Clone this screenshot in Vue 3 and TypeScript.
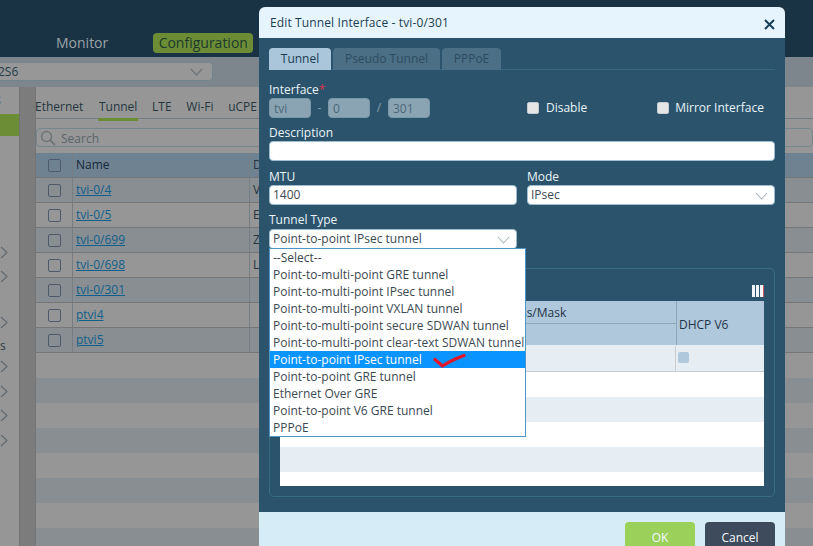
<script setup lang="ts">
const tabs: string[] = ['Ethernet', 'Tunnel', 'LTE', 'Wi-Fi', 'uCPE']
const rows: { name: string; desc: string }[] = [
  { name: 'tvi-0/4', desc: 'V' },
  { name: 'tvi-0/5', desc: 'E' },
  { name: 'tvi-0/699', desc: 'Z' },
  { name: 'tvi-0/698', desc: 'L' },
  { name: 'tvi-0/301', desc: '' },
  { name: 'ptvi4', desc: '' },
  { name: 'ptvi5', desc: '' },
]
const emptyRows: number[] = [1, 2, 3, 4, 5, 6, 7, 8]
const options: string[] = [
  '--Select--',
  'Point-to-multi-point GRE tunnel',
  'Point-to-multi-point IPsec tunnel',
  'Point-to-multi-point VXLAN tunnel',
  'Point-to-multi-point secure SDWAN tunnel',
  'Point-to-multi-point clear-text SDWAN tunnel',
  'Point-to-point IPsec tunnel',
  'Point-to-point GRE tunnel',
  'Ethernet Over GRE',
  'Point-to-point V6 GRE tunnel',
  'PPPoE',
]
const selected = 'Point-to-point IPsec tunnel'
const innerRows: number[] = [1, 2, 3, 4, 5]
</script>

<template>
  <div class="page">
    <header class="top">
      <span class="nav">Monitor</span>
      <span class="nav active">Configuration</span>
    </header>
    <div class="toolbar">
      <div class="device">
        <span class="device-name">2S6</span>
        <svg class="chev" width="13" height="8" viewBox="0 0 13 8"><path d="M1 1l5.500 6L12 1" fill="none" stroke="#6c7478" stroke-width="1.200" /></svg>
      </div>
    </div>
    <div class="content">
      <aside class="side">
        <div class="side-top">8</div>
        <div class="side-green"></div>
        <div class="side-list">
          <div class="side-row r1"><svg width="8" height="13" viewBox="0 0 8 13"><path d="M1 1l6 5.500L1 12" fill="none" stroke="#5f6870" stroke-width="1.100" /></svg></div>
          <div class="side-row r2"><svg width="8" height="13" viewBox="0 0 8 13"><path d="M1 1l6 5.500L1 12" fill="none" stroke="#5f6870" stroke-width="1.100" /></svg></div>
          <div class="side-row r3"><svg width="8" height="13" viewBox="0 0 8 13"><path d="M1 1l6 5.500L1 12" fill="none" stroke="#5f6870" stroke-width="1.100" /></svg></div>
          <div class="side-row r4"><span>s</span></div>
          <div class="side-row r5"><svg width="8" height="13" viewBox="0 0 8 13"><path d="M1 1l6 5.500L1 12" fill="none" stroke="#5f6870" stroke-width="1.100" /></svg></div>
          <div class="side-row r5"><svg width="8" height="13" viewBox="0 0 8 13"><path d="M1 1l6 5.500L1 12" fill="none" stroke="#5f6870" stroke-width="1.100" /></svg></div>
          <div class="side-row r5"><svg width="8" height="13" viewBox="0 0 8 13"><path d="M1 1l6 5.500L1 12" fill="none" stroke="#5f6870" stroke-width="1.100" /></svg></div>
          <div class="side-row r5"><svg width="8" height="13" viewBox="0 0 8 13"><path d="M1 1l6 5.500L1 12" fill="none" stroke="#5f6870" stroke-width="1.100" /></svg></div>
        </div>
      </aside>
      <div class="gutter"></div>
      <main class="main">
        <nav class="subtabs">
          <span v-for="t in tabs" :key="t" class="subtab" :class="{ on: t === 'Tunnel' }">{{ t }}</span>
        </nav>
        <div class="search">
          <svg width="16" height="16" viewBox="0 0 16 16"><circle cx="6.500" cy="6.500" r="5" fill="none" stroke="#6d7478" stroke-width="1.400" /><path d="M10.200 10.200L15 15" stroke="#6d7478" stroke-width="1.800" /></svg>
          <span class="search-text">Search</span>
        </div>
        <div class="grid">
          <div class="grow head">
            <div class="c1"><span class="cb"></span></div>
            <div class="c2">Name</div>
            <div class="c3">D</div>
          </div>
          <div v-for="(r, i) in rows" :key="r.name" class="grow" :class="i % 2 === 0 ? 'dark' : 'light'">
            <div class="c1"><span class="cb"></span></div>
            <div class="c2"><a class="link">{{ r.name }}</a></div>
            <div class="c3">{{ r.desc }}</div>
          </div>
          <div v-for="n in emptyRows" :key="n" class="empty" :class="n % 2 === 1 ? 'light' : 'dark'"></div>
        </div>
      </main>
    </div>

    <section class="modal">
      <div class="m-head">
        <span class="m-title">Edit Tunnel Interface - tvi-0/301</span>
        <svg width="11" height="11" viewBox="0 0 11 11"><path d="M1 1l9 9M10 1l-9 9" stroke="#173e57" stroke-width="2" /></svg>
      </div>
      <div class="m-body">
        <div class="m-tabs">
          <span class="m-tab on">Tunnel</span>
          <span class="m-tab w2">Pseudo Tunnel</span>
          <span class="m-tab w3">PPPoE</span>
        </div>
        <div class="lbl l-if">Interface<i>*</i></div>
        <div class="if-row">
          <span class="ro w1">tvi</span>
          <span class="sep s1">-</span>
          <span class="ro w1">0</span>
          <span class="sep s2">/</span>
          <span class="ro w1">301</span>
          <label class="chk c-dis"><span class="box"></span>Disable</label>
          <label class="chk c-mir"><span class="box"></span>Mirror Interface</label>
        </div>
        <div class="lbl l-desc">Description</div>
        <div class="inp full"></div>
        <div class="two">
          <div>
            <div class="lbl">MTU</div>
            <div class="inp">1400</div>
          </div>
          <div>
            <div class="lbl">Mode</div>
            <div class="inp sel">IPsec
              <svg width="13" height="8" viewBox="0 0 13 8"><path d="M1 1l5.500 6L12 1" fill="none" stroke="#a9b6bf" stroke-width="1.100" /></svg>
            </div>
          </div>
        </div>
        <div class="lbl l-type">Tunnel Type</div>
        <div class="type-wrap">
          <div class="inp sel">{{ selected }}
            <svg width="13" height="8" viewBox="0 0 13 8"><path d="M1 1l5.500 6L12 1" fill="none" stroke="#a9b6bf" stroke-width="1.100" /></svg>
          </div>
          <ul class="drop">
            <li v-for="o in options" :key="o" :class="{ hl: o === selected }">{{ o }}</li>
          </ul>
          <svg class="tick" width="34" height="16" viewBox="0 0 34 16"><path d="M2 6.500L9.500 13C14 10 23 5.500 31 2.500" fill="none" stroke="#e2162a" stroke-width="3.200" stroke-linecap="round" stroke-linejoin="round" /></svg>
        </div>
        <fieldset class="box-set">
          <div class="col-ico"><i></i><i></i><i></i></div>
          <div class="in-table">
            <div class="in-head">
              <div class="h-left">
                <div class="h-top">Address/Mask</div>
                <div class="h-sub">IPv6</div>
              </div>
              <div class="h-right">DHCP V6</div>
            </div>
            <div class="in-row first">
              <div class="cell-main"></div>
              <div class="cell-dhcp"><span class="mini"></span></div>
            </div>
            <div v-for="n in innerRows" :key="n" class="in-row" :class="n % 2 === 0 ? 'tint' : ''"></div>
          </div>
        </fieldset>
      </div>
      <div class="m-foot">
        <span class="btn ok">OK</span>
        <span class="btn cancel">Cancel</span>
      </div>
    </section>
  </div>
</template>

<style>
html, body { margin: 0; padding: 0; background: #969696; }
</style>

<style scoped>
.page { position: relative; width: 813px; height: 546px; overflow: hidden; font: 12px/16px "Open Sans", sans-serif; background: #969696; color: #1f2f3a; }
.top { height: 57px; background: #1a3344; display: flex; align-items: flex-end; box-sizing: border-box; padding: 0 0 4px 56px; font-size: 14px; }
.nav { color: #9aa3a8; height: 20px; line-height: 20px; }
.nav.active { margin-left: 45px; width: 100px; text-align: center; background: #6c8c36; color: #1d3a2c; border-radius: 4px; }
.toolbar { height: 30px; background: #7c868c; box-sizing: border-box; padding-top: 5px; }
.device { width: 213px; height: 19px; box-sizing: border-box; background: #979797; border: 1px solid #74858f; border-left: 0; border-radius: 0 4px 4px 0; display: flex; align-items: center; justify-content: space-between; padding: 0 9px 0 0; font-size: 12px; color: #233a48; }
.device-name { margin-left: -2px; }
.content { display: flex; height: 459px; }
.side { width: 19px; background: #969696; border-right: 1px solid #727272; position: relative; overflow: hidden; }
.side-top { height: 27px; font-size: 14px; line-height: 26px; margin-left: -7px; color: #3a5060; }
.side-green { height: 22px; background: #6c8c36; }
.side-list { padding-top: 110px; }
.side-row { height: 13px; line-height: 13px; color: #2a3a44; }
.side-row svg { display: block; }
.r1 { margin-bottom: 11px; }
.r2 { margin-bottom: 33px; }
.r3 { margin-bottom: 10px; }
.r4 { margin-bottom: 8px; }
.r5 { margin-bottom: 11.500px; }
.gutter { width: 15px; background: #7c7c7c; border-right: 1px solid #757575; }
.main { flex: 1; min-width: 0; }
.subtabs { height: 32px; box-sizing: border-box; padding-top: 12px; display: flex; border-bottom: 1px solid #6f7a81; }
.subtab { height: 20px; line-height: 16px; margin-right: 14.700px; color: #253640; position: relative; }
.subtab:first-child { margin-left: -1px; margin-right: 15.600px; }
.subtab.on::after { content: ""; position: absolute; left: -1px; right: -1px; bottom: -2px; height: 3px; background: #6c8c36; }
.search { margin-top: 9px; height: 19px; box-sizing: border-box; border: 1px solid #75868f; border-radius: 4px; background: #979797; display: flex; align-items: center; padding-left: 3px; gap: 5px; color: #59646b; }
.search-text { position: relative; top: 1px; }
.grid { margin-top: 6px; }
.grow { display: flex; height: 25px; box-sizing: border-box; border-bottom: 1px solid #767676; align-items: center; }
.grow.head { background: #6f8292; color: #16283a; }
.dark { background: #898e92; }
.light { background: #969696; }
.c1 { width: 37px; flex: none; height: 100%; display: flex; align-items: center; justify-content: center; border-right: 1px solid #767e83; box-sizing: border-box; }
.c2 { width: 177px; flex: none; height: 100%; padding-left: 3px; box-sizing: border-box; border-right: 1px solid #767e83; line-height: 24px; }
.c3 { padding-left: 3px; color: #26343d; line-height: 24px; height: 100%; }
.cb { width: 11px; height: 11px; border: 1px solid #4c5a6c; border-radius: 2px; display: block; }
.link { color: #0f5f8c; text-decoration: underline; }
.empty { height: 25px; }

.modal { position: absolute; left: 259px; top: 7px; width: 526px; height: 560px; border-radius: 6px 6px 0 0; overflow: hidden; display: flex; flex-direction: column; }
.m-head { height: 31px; flex: none; background: #e6f5fd; display: flex; align-items: center; justify-content: space-between; padding: 0 10px 0 11px; color: #1d3d52; font-size: 12px; }
.m-title { letter-spacing: 0.120px; }
.m-head svg { margin-top: 3px; }
.m-body { height: 474px; flex: none; box-sizing: border-box; background: #2b536b; padding: 10px 10px 0; color: #e9f3f8; position: relative; }
.m-tabs { height: 22px; display: flex; gap: 2px; border-bottom: 1px solid #35687f; box-sizing: border-box; }
.m-tab { width: 62px; height: 22px; box-sizing: border-box; text-align: center; line-height: 22px; border-radius: 4px 4px 0 0; background: #4b6f84; color: #2d4c60; }
.m-tab.w2 { width: 107px; }
.m-tab.w3 { width: 59px; }
.m-tab.on { background: #a9c6da; color: #1d3a52; }
.lbl { height: 15px; line-height: 15px; }
.lbl i { color: #d8344e; font-style: normal; }
.l-if { margin-top: 12px; }
.if-row { display: flex; align-items: center; height: 20px; margin-top: 1px; }
.ro { height: 20px; box-sizing: border-box; line-height: 19px; background: #8ba4b3; border: 1px solid #7a98aa; border-radius: 4px; padding-left: 4px; color: #4a6779; }
.ro.w1 { width: 42px; }
.sep { color: #86a0ae; text-align: center; }
.s1 { width: 17px; }
.s2 { width: 18px; }
.chk { display: flex; align-items: center; gap: 7px; }
.box { width: 12px; height: 12px; box-sizing: border-box; background: #e6e6e6; border: 1px solid #c4cbd0; border-radius: 2px; display: block; }
.c-dis { margin-left: 97px; }
.c-mir { margin-left: 70px; gap: 6px; }
.l-desc { margin-top: 7px; }
.inp { height: 20px; box-sizing: border-box; line-height: 18px; background: #fff; border: 1px solid #9dbed2; border-radius: 4px; padding: 0 3px; color: #3b4952; position: relative; margin-top: 1px; }
.inp.full { width: 506px; }
.sel svg { position: absolute; right: 6px; top: 6px; }
.two { display: grid; grid-template-columns: 248px 248px; gap: 10px; margin-top: 8px; }
.two .inp { margin-top: 1px; }
.l-type { margin-top: 7px; }
.type-wrap { width: 248px; position: relative; margin-top: 2px; z-index: 2; }
.type-wrap .inp { margin-top: 0; }
.drop { position: absolute; left: 0; top: 19px; width: 257px; box-sizing: border-box; margin: 0; padding: 0; list-style: none; background: #fff; border: 1px solid #4f95c8; color: #3b4952; }
.drop li { height: 17px; line-height: 17px; padding-left: 3px; white-space: nowrap; }
.drop li.hl { background: #0a94ff; color: #fff; }
.tick { position: absolute; left: 164px; top: 124px; }
.box-set { margin: 19px 0 0; padding: 0; height: 229px; box-sizing: border-box; border: 1px solid #3a6c82; border-radius: 5px; position: relative; }
.col-ico { position: absolute; right: 11px; top: 16px; display: flex; gap: 1px; height: 12px; }
.col-ico i { width: 3px; background: #f2f6fa; }
.col-ico i:last-child { box-shadow: 1px 0 0 #d05a66; }
.in-table { position: absolute; left: 10px; right: 10px; top: 32px; height: 185px; background: #fff; color: #1f3448; overflow: hidden; }
.in-head { height: 45px; background: #b0c8dc; display: flex; border-bottom: 1px solid #e6edf3; box-sizing: border-box; }
.h-left { width: 397px; box-sizing: border-box; border-right: 1px solid #8ca8bc; }
.h-top { height: 22px; line-height: 24px; padding-left: 207px; border-bottom: 1px solid #8ca8bc; }
.h-sub { height: 21px; line-height: 21px; padding-left: 222px; color: #3a78a8; }
.h-right { flex: 1; line-height: 48px; padding-left: 2px; }
.in-row { height: 25px; box-sizing: border-box; }
.in-row.first { height: 26px; display: flex; background: #e6edf3; border-bottom: 1px solid #c8ccd0; }
.cell-main { width: 396px; box-sizing: border-box; border-right: 1px solid #c8ccd0; }
.cell-dhcp { padding: 6px 0 0 2px; }
.mini { width: 11px; height: 11px; display: block; border-radius: 2px; background: #b0c8dc; }
.tint { background: #e6edf3; }
.m-foot { flex: 1; background: #d6ecf7; display: flex; justify-content: flex-end; gap: 10px; padding: 10px 10px 0; }
.btn { width: 70px; height: 34px; text-align: center; line-height: 31px; border-radius: 4px; color: #f4fbff; font-size: 12px; }
.ok { background: #9bd05a; }
.cancel { background: #3e4b5c; }
</style>
